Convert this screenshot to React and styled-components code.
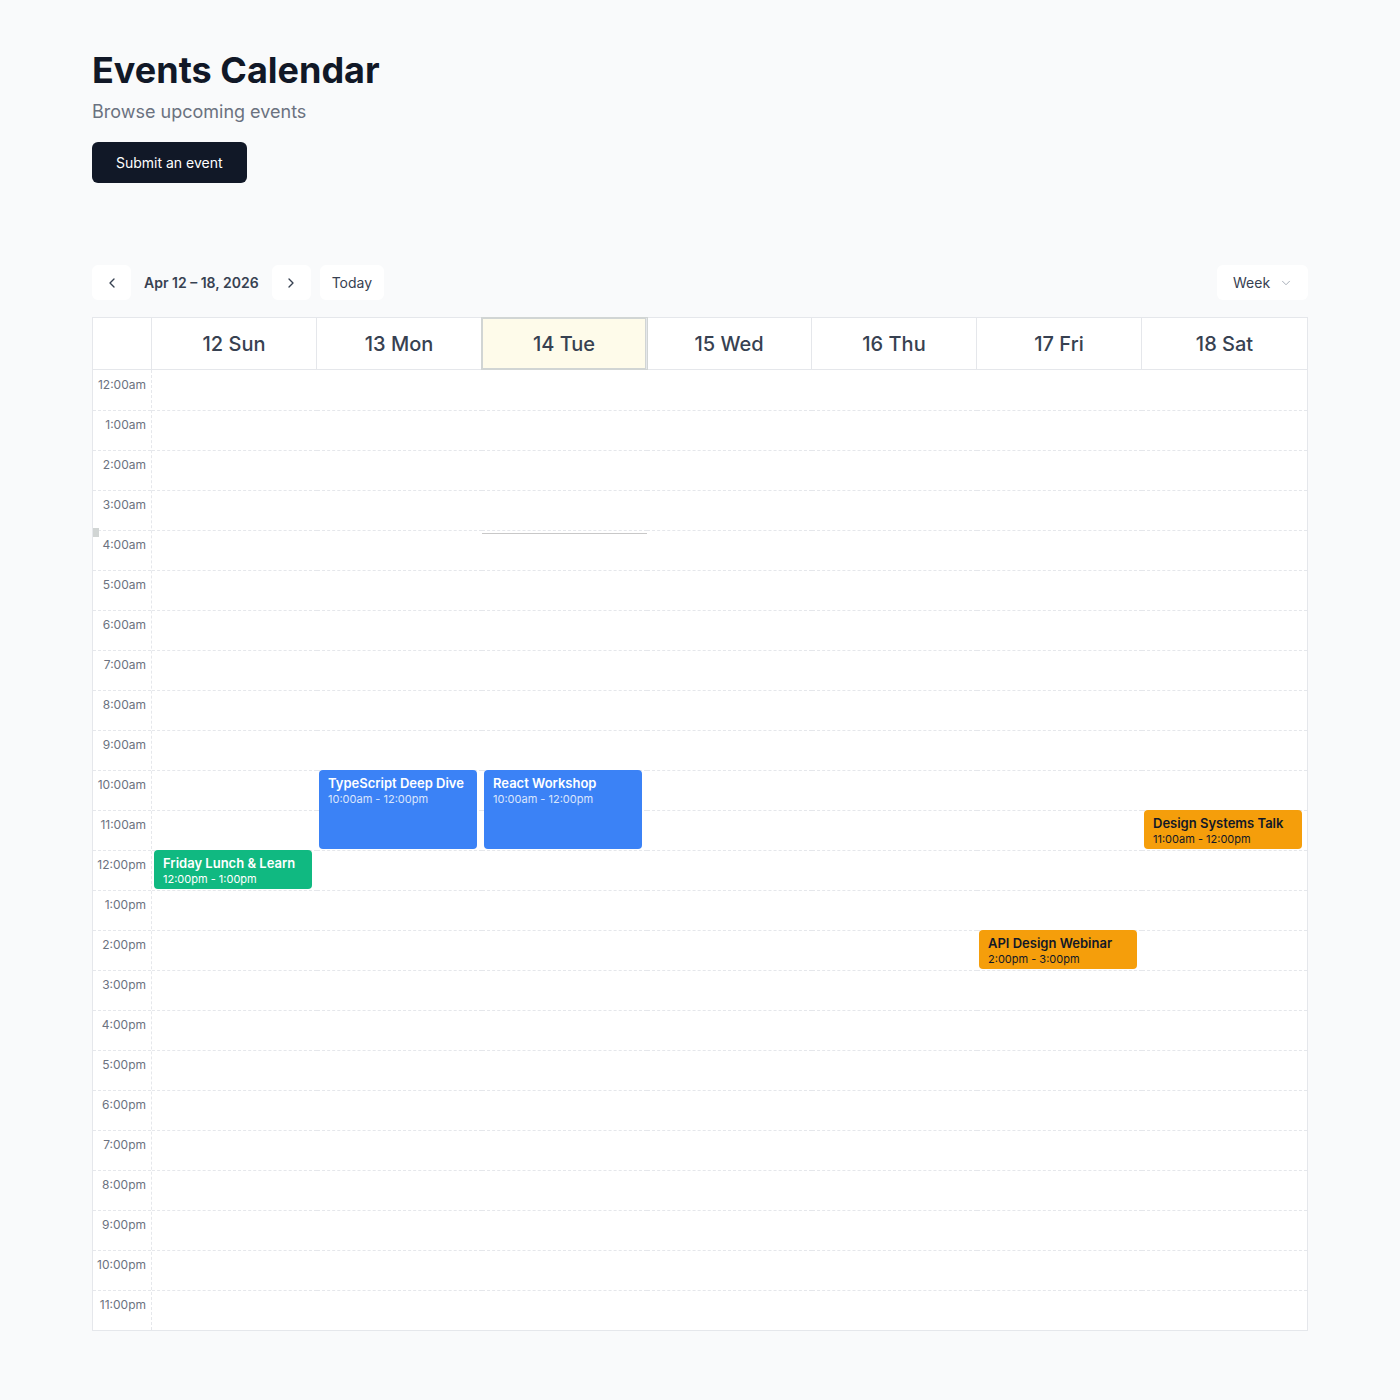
import styled, { createGlobalStyle } from 'styled-components';
import { ChevronLeft, ChevronRight, ChevronDown } from 'lucide-react';

const GlobalStyle = createGlobalStyle`
  * { box-sizing: border-box; }
  body {
    margin: 0;
    background: #f9fafb;
    font-family: Inter, "Noto Sans", sans-serif;
    color: #111827;
  }
`;

const Page = styled.div`
  padding: 50px 92px 69px;
`;

const Title = styled.h1`
  margin: 0;
  font-size: 36px;
  line-height: 40px;
  font-weight: 700;
  color: #111827;
`;

const Subtitle = styled.p`
  margin: 12px 0 0;
  font-size: 18px;
  line-height: 20px;
  color: #6b7280;
`;

const PrimaryButton = styled.button`
  margin-top: 20px;
  height: 41px;
  padding: 0 24px;
  border: none;
  border-radius: 6px;
  background: #111827;
  color: #fff;
  font-family: inherit;
  font-size: 14px;
`;

const Toolbar = styled.div`
  display: flex;
  align-items: center;
  justify-content: space-between;
  margin-top: 82px;
  height: 35px;
`;

const ToolGroup = styled.div`
  display: flex;
  align-items: center;
`;

const ToolButton = styled.button`
  height: 35px;
  min-width: 39px;
  padding: ${(p) => (p.$wide ? '0 12px' : '0')};
  margin-left: ${(p) => p.$ml || 0}px;
  display: flex;
  align-items: center;
  justify-content: center;
  gap: 9px;
  border: none;
  border-radius: 6px;
  background: #fff;
  color: #374151;
  font-family: inherit;
  font-size: 14px;
`;

const ViewSelect = styled(ToolButton)`
  width: 91px;
  padding-left: 16px;
  justify-content: flex-start;
`;

const RangeLabel = styled.span`
  margin: 0 13px;
  font-size: 14px;
  font-weight: 600;
  color: #374151;
`;

const Calendar = styled.div`
  margin-top: 17px;
  background: #fff;
  border: 1px solid #e5e7eb;
`;

const HeaderRow = styled.div`
  display: grid;
  grid-template-columns: 59px repeat(7, 1fr);
  height: 52px;
  border-bottom: 1px solid #e5e7eb;
`;

const HeaderCell = styled.div`
  display: flex;
  align-items: center;
  justify-content: center;
  font-size: 20px;
  font-weight: 500;
  color: #374151;
  border-right: ${(p) => (p.$last ? 'none' : '1px solid #e5e7eb')};
  background: ${(p) => (p.$today ? '#fefbea' : 'transparent')};
  box-shadow: ${(p) => (p.$today ? '0 0 0 1px #d1d5d4, inset 0 0 0 1px #d1d5d4' : 'none')};
  position: relative;
  z-index: ${(p) => (p.$today ? 1 : 0)};
`;

const Body = styled.div`
  display: grid;
  grid-template-columns: 59px repeat(7, 1fr);
`;

const Gutter = styled.div`
  position: relative;
  border-right: 1px dashed #e5e7eb;
`;

const TimeLabel = styled.div`
  height: 40px;
  padding: ${(p) => (p.$first ? 7 : 6)}px 5px 0 0;
  text-align: right;
  font-size: 12px;
  line-height: 16px;
  color: #6b7280;
  border-top: ${(p) => (p.$first ? 'none' : '1px dashed #e5e7eb')};
`;

const DayColumn = styled.div`
  position: relative;
`;

const Slot = styled.div`
  height: 40px;
  border-top: ${(p) => (p.$first ? 'none' : '1px dashed #e5e7eb')};
`;

const NowLine = styled.div`
  position: absolute;
  left: 0;
  right: 0;
  height: 1px;
  background: #c8c8c8;
`;

const NowMarker = styled.div`
  position: absolute;
  left: 0;
  width: 6px;
  height: 9px;
  background: #d1d5d4;
`;

const Event = styled.div`
  position: absolute;
  left: 2px;
  right: 5px;
  padding: 5px 9px;
  border-radius: 4px;
  background: ${(p) => p.$bg};
  color: ${(p) => p.$fg};
  overflow: hidden;
`;

const EventTitle = styled.div`
  font-size: 13px;
  line-height: 17px;
  font-weight: 600;
  white-space: nowrap;
`;

const EventTime = styled.div`
  font-size: 11px;
  line-height: 14px;
  opacity: ${(p) => (p.$dim ? 0.8 : 1)};
`;

const days = ['12 Sun', '13 Mon', '14 Tue', '15 Wed', '16 Thu', '17 Fri', '18 Sat'];

const hours = Array.from({ length: 24 }, (_, i) => {
  const h = i % 12 === 0 ? 12 : i % 12;
  return `${h}:00${i < 12 ? 'am' : 'pm'}`;
});

const BLUE = { bg: '#3b82f6', fg: '#fff', dim: true };
const GREEN = { bg: '#10b981', fg: '#fff', dim: false };
const AMBER = { bg: '#f59e0b', fg: '#111827', dim: false };

const events = [
  { day: 0, start: 12, end: 13, title: 'Friday Lunch & Learn', time: '12:00pm - 1:00pm', c: GREEN },
  { day: 1, start: 10, end: 12, title: 'TypeScript Deep Dive', time: '10:00am - 12:00pm', c: BLUE },
  { day: 2, start: 10, end: 12, title: 'React Workshop', time: '10:00am - 12:00pm', c: BLUE },
  { day: 5, start: 14, end: 15, title: 'API Design Webinar', time: '2:00pm - 3:00pm', c: AMBER },
  { day: 6, start: 11, end: 12, title: 'Design Systems Talk', time: '11:00am - 12:00pm', c: AMBER },
];

// current time (about 4:04am) as a pixel offset in the grid
const NOW_Y = 163;

export default function App() {
  return (
    <Page>
      <GlobalStyle />
      <Title>Events Calendar</Title>
      <Subtitle>Browse upcoming events</Subtitle>
      <PrimaryButton>Submit an event</PrimaryButton>

      <Toolbar>
        <ToolGroup>
          <ToolButton aria-label="Previous">
            <ChevronLeft size={16} strokeWidth={2} />
          </ToolButton>
          <RangeLabel>Apr 12 – 18, 2026</RangeLabel>
          <ToolButton aria-label="Next">
            <ChevronRight size={16} strokeWidth={2} />
          </ToolButton>
          <ToolButton $wide $ml={9}>Today</ToolButton>
        </ToolGroup>
        <ViewSelect $wide>
          Week
          <ChevronDown size={14} color="#9ca3af" strokeWidth={1.5} />
        </ViewSelect>
      </Toolbar>

      <Calendar>
        <HeaderRow>
          <HeaderCell />
          {days.map((d, i) => (
            <HeaderCell key={d} $today={i === 2} $last={i === 6}>
              {d}
            </HeaderCell>
          ))}
        </HeaderRow>
        <Body>
          <Gutter>
            {hours.map((h, i) => (
              <TimeLabel key={h} $first={i === 0}>
                {h}
              </TimeLabel>
            ))}
            <NowMarker style={{ top: NOW_Y - 5 }} />
          </Gutter>
          {days.map((d, di) => (
            <DayColumn key={d}>
              {hours.map((h, i) => (
                <Slot key={h} $first={i === 0} />
              ))}
              {di === 2 && <NowLine style={{ top: NOW_Y }} />}
              {events
                .filter((e) => e.day === di)
                .map((e) => (
                  <Event
                    key={e.title}
                    $bg={e.c.bg}
                    $fg={e.c.fg}
                    style={{ top: e.start * 40, height: (e.end - e.start) * 40 - 1 }}
                  >
                    <EventTitle>{e.title}</EventTitle>
                    <EventTime $dim={e.c.dim}>{e.time}</EventTime>
                  </Event>
                ))}
            </DayColumn>
          ))}
        </Body>
      </Calendar>
    </Page>
  );
}
